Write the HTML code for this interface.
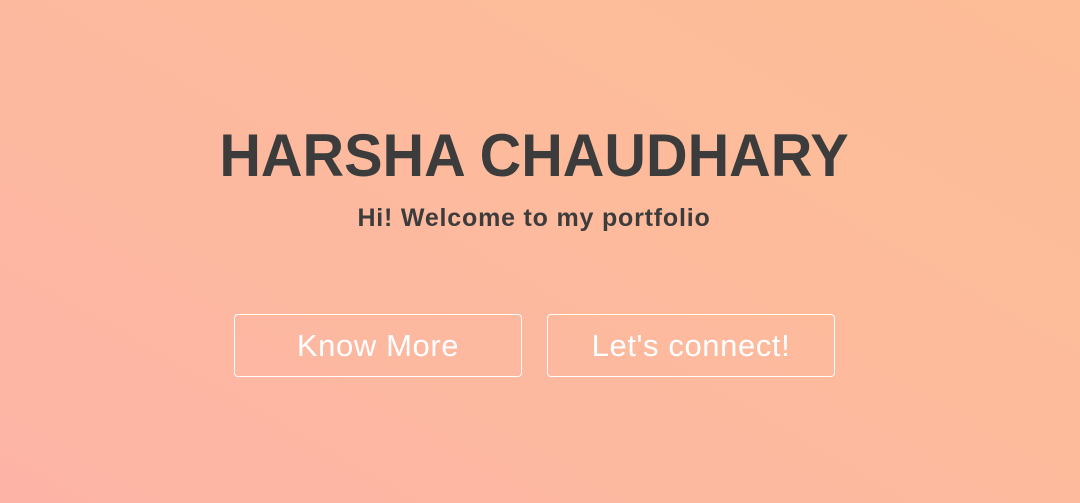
<!DOCTYPE html>
<html><head><style>
html,body{margin:0;padding:0;}
body{width:1080px;height:503px;overflow:hidden;background:linear-gradient(30deg,#fdb4a6 0%,#fdbb9c 60%,#fdbd96 100%);font-family:"Liberation Sans",sans-serif;position:relative;}
h1{position:absolute;left:-6px;width:1080px;top:118px;margin:0;text-align:center;font-size:60px;font-weight:700;color:#3c3c3c;letter-spacing:0;line-height:76px;transform:scaleX(0.96);}
.sub{position:absolute;left:-6px;width:1080px;top:201px;text-align:center;font-size:25px;font-weight:700;color:#3c3c3c;line-height:34px;letter-spacing:0.8px;}
.btn{position:absolute;top:314px;width:286px;height:61px;border:1px solid #fff;border-radius:4px;color:#fff;font-size:31px;text-align:center;line-height:61px;letter-spacing:0.6px;}
</style></head><body>
<h1>HARSHA CHAUDHARY</h1>
<div class="sub">Hi! Welcome to my portfolio</div>
<div class="btn" style="left:234px">Know More</div>
<div class="btn" style="left:547px">Let's connect!</div>
</body></html>
